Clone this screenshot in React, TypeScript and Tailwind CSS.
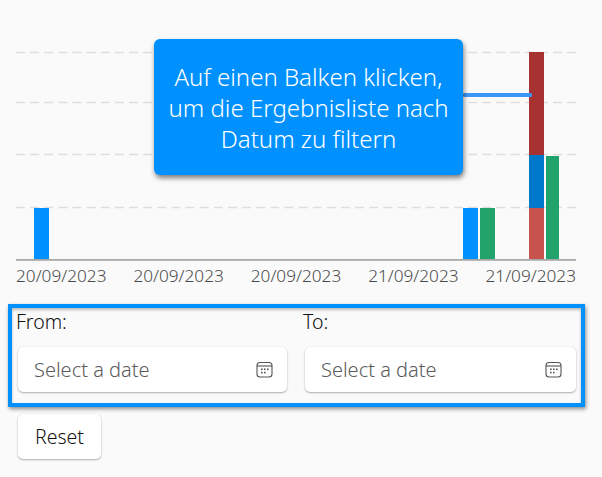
const Calendar = () => (
  <svg width="17" height="17" viewBox="0 0 17 17" fill="none" className="shrink-0 text-[#555]">
    <rect x="1" y="1.5" width="15" height="14.5" rx="3" stroke="currentColor" strokeWidth="1.1" />
    <path d="M1 5 H16" stroke="currentColor" strokeWidth="1.1" />
    <g fill="currentColor">
      <rect x="5" y="7.5" width="1.6" height="1.6" />
      <rect x="8" y="7.5" width="1.6" height="1.6" />
      <rect x="11" y="7.5" width="1.6" height="1.6" />
      <rect x="5" y="10.8" width="1.6" height="1.6" />
      <rect x="8" y="10.8" width="1.6" height="1.6" />
    </g>
  </svg>
);

const DateField = ({ label }: { label: string }) => (
  <div className="flex flex-col">
    <div className="-ml-[2px] h-[39px] pt-[2px] text-[19.5px] leading-[24px] font-[350] text-[#111]">{label}</div>
    <div className="flex h-[45px] items-center justify-between rounded-[5px] bg-white pl-[16px] pr-[14px] shadow-[0_1px_2px_rgba(0,0,0,0.3),0_0_1px_rgba(0,0,0,0.12)]">
      <span className="text-[20px] font-[350] text-[#5a5a5a]">Select a date</span>
      <Calendar />
    </div>
  </div>
);

export default function App() {
  const grid = [52.5, 102.5, 154.5, 207.5];
  return (
    <div className="relative h-[477px] w-[602px] overflow-hidden bg-[#fafafa] pt-[40px] font-['Noto_Sans',sans-serif]">
      <div className="mx-4 w-[560px]">
        <svg width="560" height="222" viewBox="0 0 560 222" className="block">
          {grid.map((y) => (
            <line key={y} x1="0" x2="560" y1={y - 40} y2={y - 40} stroke="#dedede" strokeWidth="1.5" strokeDasharray="9 5.13" />
          ))}
          <rect x="18" y="168" width="15" height="52" fill="#0091ff" />
          <rect x="447" y="168" width="15" height="52" fill="#0091ff" />
          <rect x="464" y="168" width="15" height="52" fill="#22a36b" />
          <rect x="513" y="12" width="15" height="103" fill="#a83232" />
          <rect x="513" y="115" width="15" height="53" fill="#0078cc" />
          <rect x="513" y="168" width="15" height="52" fill="#c8524c" />
          <rect x="530" y="116" width="13" height="104" fill="#22a36b" />
          <rect x="0" y="219" width="560" height="1.8" fill="#a8a8a8" />
          <rect x="447" y="53" width="69" height="4" rx="1.5" fill="#3c96f5" />
        </svg>
        <div className="flex justify-between pt-[2px] text-[17.2px] leading-[24px] font-[350] text-[#4a4a4a]">
          <span>20/09/2023</span>
          <span>20/09/2023</span>
          <span>20/09/2023</span>
          <span>21/09/2023</span>
          <span>21/09/2023</span>
        </div>
      </div>

      <div className="ml-2 mt-[16px] h-[103px] w-[577px] border-4 border-[#0091ff] shadow-[1px_2px_4px_rgba(0,0,0,0.45),inset_0_2px_3px_rgba(0,0,0,0.25)]">
        <div className="grid grid-cols-[269px_271px] gap-x-[18px] pl-[6px]">
          <DateField label="From:" />
          <DateField label="To:" />
        </div>
      </div>

      <button className="ml-[18px] mt-[7px] flex h-[45px] w-[83px] items-center justify-center rounded-[5px] bg-white text-[19.5px] font-[350] text-[#111] shadow-[0_1px_2px_rgba(0,0,0,0.3),0_0_1px_rgba(0,0,0,0.12)]">
        Reset
      </button>

      <div className="absolute left-[154px] top-[39px] flex h-[136px] w-[309px] items-center justify-center rounded-[6px] bg-[#0091ff] pt-[1px] text-center text-[24px] leading-[31px] font-[350] text-white shadow-[1px_3px_5px_rgba(0,0,0,0.5)]">
        <div>
          Auf einen Balken klicken,
          <br />
          um die Ergebnisliste nach
          <br />
          Datum zu filtern
        </div>
      </div>
    </div>
  );
}
